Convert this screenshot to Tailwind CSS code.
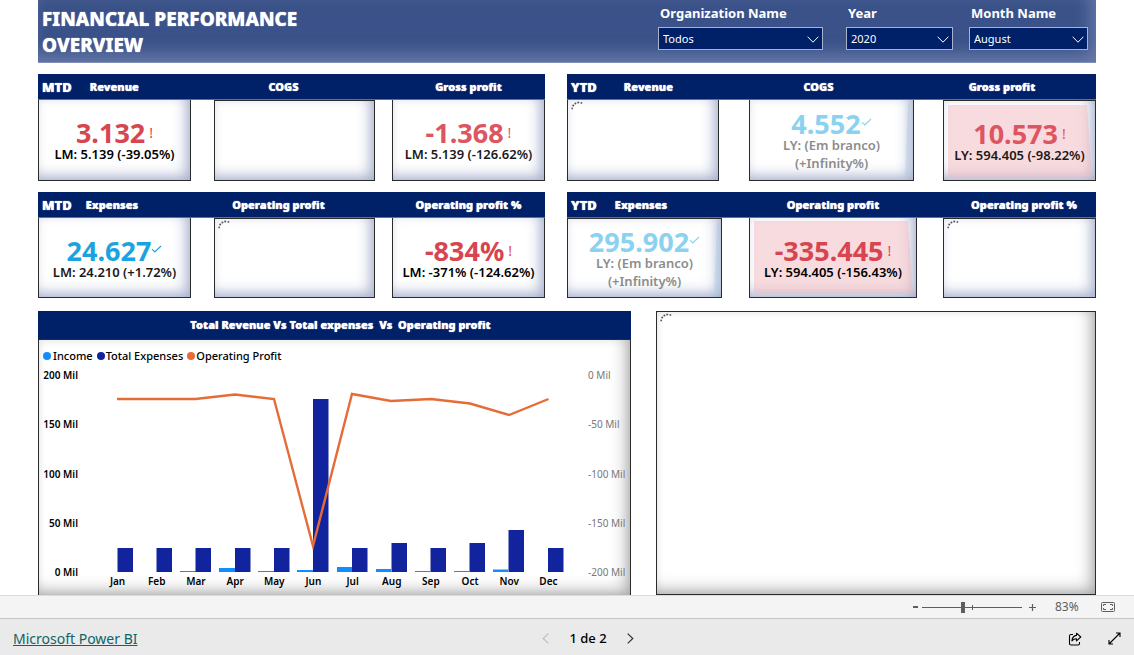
<!DOCTYPE html>
<html lang="pt">
<head>
<meta charset="utf-8">
<meta name="viewport" content="width=device-width, initial-scale=1">
<title>Financial Performance Overview</title>
<script src="https://cdn.jsdelivr.net/npm/@tailwindcss/browser@4"></script>
</head>
<body class="flex h-screen flex-col overflow-hidden bg-white font-['Noto_Sans','Open_Sans',sans-serif] text-black">
<svg class="hidden" aria-hidden="true">
  <symbol id="spinner" viewBox="0 0 12 9"><g fill="#555"><circle cx="1.2" cy="7.4" r=".9"/><circle cx="2.2" cy="4.6" r="1"/><circle cx="4.4" cy="2.4" r="1"/><circle cx="7.2" cy="1.4" r="1"/><circle cx="10.4" cy="1.9" r=".9"/></g></symbol>
  <symbol id="tick" viewBox="0 0 11 8"><path d="M1 4.2 3.8 7 10 1" fill="none" stroke="currentColor" stroke-width="1.1"/></symbol>
  <symbol id="caret" viewBox="0 0 12 7"><path d="M.6.7 6 6.2 11.4.7" fill="none" stroke="currentColor"/></symbol>
</svg>

<main class="flex min-h-0 flex-1 flex-col overflow-hidden px-[38px]">
  <header class="flex h-[63px] shrink-0 justify-between border-b border-[#8090b8] bg-[#3a5289] pr-2 pl-1 shadow-[inset_-6px_-8px_16px_rgba(150,160,200,0.5)]">
    <h1 class="w-[280px] pt-[6px] text-[19px] leading-[26px] font-extrabold text-white text-shadow-[0_0_1px_#fff]">FINANCIAL PERFORMANCE OVERVIEW</h1>
    <div class="flex text-white">
      <div class="mr-[23px] w-[165px]">
        <label for="org" class="block pt-1 pl-[2px] text-[13px] leading-[18px] font-bold">Organization Name</label>
        <div class="relative mt-[5px]">
          <select id="org" class="block h-[23px] w-full appearance-none border border-[#a9b3cd] bg-[#002068] pt-[2px] pl-1 text-[11px] text-white"><option>Todos</option></select>
          <svg class="pointer-events-none absolute top-[9px] right-1 h-[7px] w-3"><use href="#caret"/></svg>
        </div>
      </div>
      <div class="mr-4 w-[107px]">
        <label for="year" class="block pt-1 pl-[2px] text-[13px] leading-[18px] font-bold">Year</label>
        <div class="relative mt-[5px]">
          <select id="year" class="block h-[23px] w-full appearance-none border border-[#a9b3cd] bg-[#002068] pt-[2px] pl-1 text-[11px] text-white"><option>2020</option></select>
          <svg class="pointer-events-none absolute top-[9px] right-1 h-[7px] w-3"><use href="#caret"/></svg>
        </div>
      </div>
      <div class="w-[119px]">
        <label for="month" class="block pt-1 pl-[2px] text-[13px] leading-[18px] font-bold">Month Name</label>
        <div class="relative mt-[5px]">
          <select id="month" class="block h-[23px] w-full appearance-none border border-[#a9b3cd] bg-[#002068] pt-[2px] pl-1 text-[11px] text-white"><option>August</option></select>
          <svg class="pointer-events-none absolute top-[9px] right-1 h-[7px] w-3"><use href="#caret"/></svg>
        </div>
      </div>
    </div>
  </header>

  <!-- First KPI row -->
  <div class="mt-[11px] grid shrink-0 grid-cols-[507fr_529fr] gap-[22px]">
    <section>
      <div class="grid h-[26px] grid-cols-[153fr_161fr_153fr] items-center gap-x-5 border-b border-[#5a6fa3] bg-[#002068] pt-[2px] text-center text-[11px] font-black text-white text-shadow-[0_0_1px_#fff]">
        <h2 class="flex items-center gap-[18px] pl-1"><span class="text-[13px]">MTD</span><span>Revenue</span></h2>
        <h2 class="pr-4">COGS</h2>
        <h2>Gross profit</h2>
      </div>
      <div class="grid h-[81px] grid-cols-[153fr_23fr_161fr_17fr_153fr] text-center">
        <article class="col-start-1 flex flex-col items-center justify-center border border-t-0 border-[#2b2b2b] pt-1 shadow-[inset_-8px_-8px_14px_-4px_rgba(70,90,150,0.42),inset_0_0_8px_rgba(70,90,150,0.15)]">
          <p class="flex items-center text-[27px] leading-[24px] font-bold text-[#d64550]">3.132<span class="ml-1 text-[14px] font-normal">!</span></p>
          <p class="text-[13px] leading-[18px] font-semibold">LM: 5.139 (-39.05%)</p>
        </article>
        <article class="col-start-3 border border-[#2b2b2b] shadow-[inset_-8px_-8px_14px_-4px_rgba(70,90,150,0.42),inset_0_0_8px_rgba(70,90,150,0.15)]"></article>
        <article class="col-start-5 flex flex-col items-center justify-center border border-t-0 border-[#2b2b2b] pt-1 shadow-[inset_-8px_-8px_14px_-4px_rgba(70,90,150,0.42),inset_0_0_8px_rgba(70,90,150,0.15)]">
          <p class="flex items-center text-[27px] leading-[24px] font-bold text-[#dc5560]">-1.368<span class="ml-1 text-[14px] font-normal">!</span></p>
          <p class="text-[13px] leading-[18px] font-semibold text-[#1a1a1a]">LM: 5.139 (-126.62%)</p>
        </article>
      </div>
    </section>
    <section>
      <div class="grid h-[26px] grid-cols-[152fr_165fr_152fr] items-center gap-x-[30px] border-b border-[#5a6fa3] bg-[#002068] pt-[2px] text-center text-[11px] font-black text-white text-shadow-[0_0_1px_#fff]">
        <h2 class="flex items-center gap-[27px] pl-1"><span class="text-[13px]">YTD</span><span>Revenue</span></h2>
        <h2 class="pr-[26px]">COGS</h2>
        <h2 class="pr-9">Gross profit</h2>
      </div>
      <div class="grid h-[81px] grid-cols-[152fr_30fr_165fr_29fr_153fr] text-center">
        <article class="col-start-1 border border-t-0 border-[#2b2b2b] pt-px shadow-[inset_-8px_-8px_14px_-4px_rgba(70,90,150,0.42),inset_0_0_8px_rgba(70,90,150,0.15)]"><svg class="ml-[3px] h-[9px] w-3" role="img" aria-label="Loading"><use href="#spinner"/></svg></article>
        <article class="relative col-start-3 flex flex-col items-center justify-center border border-t-0 border-[#2b2b2b] pt-1 shadow-[inset_-8px_-8px_14px_-4px_rgba(70,90,150,0.42),inset_0_0_8px_rgba(70,90,150,0.15)]">
          <svg class="absolute inset-0 size-full" viewBox="0 0 163 79" preserveAspectRatio="none"><path d="M158 4h2v72h-5z" fill="#a9cde8" opacity=".4"/></svg>
          <p class="flex items-center text-[27px] leading-[24px] font-bold text-[#8bd1f0]">4.552<svg class="mb-1 h-2 w-[11px]"><use href="#tick"/></svg></p>
          <p class="w-[110px] text-[13px] leading-[18px] font-semibold text-[#8c8c8c]">LY: (Em branco) (+Infinity%)</p>
        </article>
        <article class="relative col-start-5 flex flex-col items-center justify-center border border-[#2b2b2b] pt-1 shadow-[inset_-8px_-8px_14px_-4px_rgba(70,90,150,0.42),inset_0_0_8px_rgba(70,90,150,0.15)]">
          <svg class="absolute inset-0 size-full" viewBox="0 0 151 79" preserveAspectRatio="none"><path d="M4 4h139l5 73H4z" fill="#f0b4bb" opacity=".48"/></svg>
          <p class="relative flex items-center text-[27px] leading-[24px] font-bold text-[#dc5560]">10.573<span class="ml-1 text-[14px] font-normal">!</span></p>
          <p class="relative text-[13px] leading-[18px] font-semibold text-[#1a1a1a]">LY: 594.405 (-98.22%)</p>
        </article>
      </div>
    </section>
  </div>

  <!-- Second KPI row -->
  <div class="mt-[11px] grid shrink-0 grid-cols-[507fr_529fr] gap-[22px]">
    <section>
      <div class="grid h-[26px] grid-cols-[153fr_161fr_153fr] items-center gap-x-5 border-b border-[#5a6fa3] bg-[#002068] pt-[2px] text-center text-[11px] font-black text-white text-shadow-[0_0_1px_#fff]">
        <h2 class="flex items-center gap-[14px] pl-1"><span class="text-[13px]">MTD</span><span>Expenses</span></h2>
        <h2 class="pr-[26px]">Operating profit</h2>
        <h2>Operating profit %</h2>
      </div>
      <div class="grid h-[80px] grid-cols-[153fr_23fr_161fr_17fr_153fr] text-center">
        <article class="col-start-1 flex flex-col items-center justify-center border border-t-0 border-[#2b2b2b] pt-1 shadow-[inset_-8px_-8px_14px_-4px_rgba(70,90,150,0.42),inset_0_0_8px_rgba(70,90,150,0.15)]">
          <p class="flex items-center text-[27px] leading-[24px] font-bold text-[#1aa3e0]">24.627<svg class="mb-1 h-2 w-[11px]"><use href="#tick"/></svg></p>
          <p class="text-[13px] leading-[18px] font-semibold text-[#1a1a1a]">LM: 24.210 (+1.72%)</p>
        </article>
        <article class="col-start-3 border border-[#2b2b2b] shadow-[inset_-8px_-8px_14px_-4px_rgba(70,90,150,0.42),inset_0_0_8px_rgba(70,90,150,0.15)]"><svg class="mt-px ml-[3px] h-[9px] w-3" role="img" aria-label="Loading"><use href="#spinner"/></svg></article>
        <article class="col-start-5 flex flex-col items-center justify-center border border-t-0 border-[#2b2b2b] pt-1 shadow-[inset_-8px_-8px_14px_-4px_rgba(70,90,150,0.42),inset_0_0_8px_rgba(70,90,150,0.15)]">
          <p class="flex items-center text-[27px] leading-[24px] font-bold text-[#d64550]">-834%<span class="ml-1 text-[14px] font-normal">!</span></p>
          <p class="text-[13px] leading-[18px] font-semibold">LM: -371% (-124.62%)</p>
        </article>
      </div>
    </section>
    <section>
      <div class="grid h-[26px] grid-cols-[155fr_168fr_152fr] items-center gap-x-[27px] border-b border-[#5a6fa3] bg-[#002068] pt-[2px] text-center text-[11px] font-black text-white text-shadow-[0_0_1px_#fff]">
        <h2 class="flex items-center gap-[18px] pl-1"><span class="text-[13px]">YTD</span><span>Expenses</span></h2>
        <h2>Operating profit</h2>
        <h2 class="pl-2">Operating profit %</h2>
      </div>
      <div class="grid h-[80px] grid-cols-[155fr_27fr_168fr_26fr_153fr] text-center">
        <article class="relative col-start-1 flex flex-col items-center justify-center border border-[#2b2b2b] pt-1 shadow-[inset_-8px_-8px_14px_-4px_rgba(70,90,150,0.42),inset_0_0_8px_rgba(70,90,150,0.15)]">
          <svg class="absolute inset-0 size-full" viewBox="0 0 153 78" preserveAspectRatio="none"><path d="M149 4h3l-1 72h-5z" fill="#a9cde8" opacity=".4"/></svg>
          <p class="flex items-center text-[27px] leading-[24px] font-bold text-[#8bd1f0]">295.902<svg class="mb-1 h-2 w-[11px]"><use href="#tick"/></svg></p>
          <p class="w-[110px] text-[13px] leading-[18px] font-semibold text-[#8c8c8c]">LY: (Em branco) (+Infinity%)</p>
        </article>
        <article class="relative col-start-3 flex flex-col items-center justify-center border border-t-0 border-[#2b2b2b] pt-1 shadow-[inset_-8px_-8px_14px_-4px_rgba(70,90,150,0.42),inset_0_0_8px_rgba(70,90,150,0.15)]">
          <svg class="absolute inset-0 size-full" viewBox="0 0 166 78" preserveAspectRatio="none"><path d="M4 3h154l5 72H4z" fill="#f0b4bb" opacity=".48"/></svg>
          <p class="relative flex items-center text-[27px] leading-[24px] font-bold text-[#d64550]">-335.445<span class="ml-1 text-[14px] font-normal">!</span></p>
          <p class="relative text-[13px] leading-[18px] font-semibold">LY: 594.405 (-156.43%)</p>
        </article>
        <article class="col-start-5 border border-[#2b2b2b] shadow-[inset_-8px_-8px_14px_-4px_rgba(70,90,150,0.42),inset_0_0_8px_rgba(70,90,150,0.15)]"><svg class="mt-px ml-[3px] h-[9px] w-3" role="img" aria-label="Loading"><use href="#spinner"/></svg></article>
      </div>
    </section>
  </div>

  <div class="mt-[13px] grid min-h-0 flex-1 grid-cols-[593fr_440fr] gap-[25px]">
    <section class="flex flex-col">
      <h2 class="h-[28px] bg-[#002068] pl-3 text-center text-[11px] leading-[28px] font-black whitespace-pre text-white text-shadow-[0_0_1px_#fff]">Total Revenue Vs Total expenses  Vs  Operating profit</h2>
      <div class="flex-1 border border-b-0 border-[#2b2b2b] px-1 pt-2 shadow-[inset_-8px_-8px_16px_-4px_rgba(0,0,0,0.3),inset_0_0_8px_rgba(0,0,0,0.1)]">
        <ul class="flex gap-1 text-[11px] leading-4 font-medium">
          <li class="flex items-center gap-[2px]"><span class="size-2 rounded-full bg-[#118dff]"></span>Income</li>
          <li class="flex items-center gap-px"><span class="size-2 rounded-full bg-[#12239e]"></span>Total Expenses</li>
          <li class="flex items-center gap-px"><span class="size-2 rounded-full bg-[#e66c37]"></span>Operating Profit</li>
        </ul>
        <div class="mt-[11px] flex">
          <div class="-my-[7px] flex w-[35px] flex-col justify-between text-right text-[10px] leading-[14px] font-semibold whitespace-nowrap">
            <span>200 Mil</span><span>150 Mil</span><span>100 Mil</span><span>50 Mil</span><span>0 Mil</span>
          </div>
          <svg class="mr-5 ml-5 h-[197px] min-w-0 flex-1" viewBox="0 0 470 197" preserveAspectRatio="none" role="img" aria-label="Income, expenses and operating profit by month">
            <g fill="#118dff"><path d="M82 196h16v1H82zM121 193h16v4h-16zM160 196h16v1h-16zM199 195h16v2h-16zM239 192h15v5h-15zM278 194h15v3h-15zM317 196h15v1h-15zM356 196h15v1h-15zM395 194.500h15v2.500h-15z"/></g>
            <g fill="#12239e"><path d="M19.500 173H35v24H19.500zM58.500 173H74v24H58.500zM97.500 173H113v24H97.500zM137 173h15.500v24H137zM176 173h15.500v24H176zM215 24h15.500v173H215zM254 173h15.500v24H254zM293.500 168H309v29h-15.500zM332.500 173H348v24h-15.500zM371.500 168H387v29h-15.500zM410.500 155H426v42h-15.500zM450 173h15.500v24H450z"/></g>
            <polyline fill="none" stroke="#e66c37" stroke-width="2.400" points="19,24 58,24 97.500,24 137,19.500 176,24 215,171 254,19 293,26 333,24 372,28.500 411,40 450.500,24"/>
          </svg>
          <div class="-my-[7px] flex w-[38px] flex-col justify-between text-[10px] leading-[14px] whitespace-nowrap text-[#777]">
            <span>0 Mil</span><span>-50 Mil</span><span>-100 Mil</span><span>-150 Mil</span><span>-200 Mil</span>
          </div>
        </div>
        <div class="mt-[2px] mr-[58px] ml-[55px] grid grid-cols-12 text-center text-[10px] leading-[14px] font-semibold">
          <span>Jan</span><span>Feb</span><span>Mar</span><span>Apr</span><span>May</span><span>Jun</span><span>Jul</span><span>Aug</span><span>Sep</span><span>Oct</span><span>Nov</span><span>Dec</span>
        </div>
      </div>
    </section>
    <section class="border border-[#2b2b2b] shadow-[inset_-8px_-8px_16px_-4px_rgba(0,0,0,0.3),inset_0_0_8px_rgba(0,0,0,0.1)]"><svg class="mt-px ml-[3px] h-[9px] w-3" role="img" aria-label="Loading"><use href="#spinner"/></svg></section>
  </div>
</main>

<div class="flex h-6 shrink-0 items-center justify-end border-y border-t-[#dcdcdc] border-b-[#c4c4c4] bg-[#f4f4f4] pr-[19px] text-[#605e5c]">
  <button aria-label="Zoom out" class="flex h-4 w-[14px] items-center justify-center"><svg class="h-2 w-[5px]" viewBox="0 0 5 8"><path d="M0 4h5" stroke="currentColor" stroke-width="2"/></svg></button>
  <div class="relative flex h-4 w-[100px] items-center">
    <input type="range" aria-label="Zoom" min="0" max="100" value="41" class="h-4 w-full appearance-none bg-transparent [&::-webkit-slider-runnable-track]:h-px [&::-webkit-slider-runnable-track]:bg-[#605e5c] [&::-webkit-slider-thumb]:-mt-[5px] [&::-webkit-slider-thumb]:h-[11px] [&::-webkit-slider-thumb]:w-1 [&::-webkit-slider-thumb]:appearance-none [&::-webkit-slider-thumb]:bg-[#605e5c]">
    <span class="pointer-events-none absolute top-[6px] left-1/2 h-[5px] w-px bg-[#605e5c]"></span>
  </div>
  <button aria-label="Zoom in" class="ml-1 flex h-4 w-3 items-center justify-center"><svg class="size-[9px]" viewBox="0 0 9 9"><path d="M4.500 1v7M1 4.500h7" stroke="currentColor" stroke-width="1.200"/></svg></button>
  <span class="ml-[17px] w-[46px] text-[12px] leading-4">83%</span>
  <button aria-label="Fit to page"><svg class="h-[10px] w-[14px]" viewBox="0 0 14 10" fill="none" stroke="currentColor"><rect x=".5" y=".5" width="13" height="9" rx="1"/><path d="M2.500 4V2.500H5M9 2.500h2.500V4M11.500 6v1.500H9M5 7.500H2.500V6"/></svg></button>
</div>

<footer class="grid h-9 shrink-0 grid-cols-[1fr_auto_1fr] items-center bg-[#eaeaea] px-[13px] pt-[3px]">
  <a href="#" class="justify-self-start text-[14px] leading-5 text-[#0f6466] underline">Microsoft Power BI</a>
  <nav class="mr-[-42px] flex items-center" aria-label="Pages">
    <button aria-label="Previous page" class="text-[#bdbdbd]"><svg class="h-[11px] w-[7px]" viewBox="0 0 7 11"><path d="M6.300.6 1.200 5.500l5.100 4.900" fill="none" stroke="currentColor" stroke-width="1.100"/></svg></button>
    <span class="w-[78px] text-center text-[13px] font-medium">1 de 2</span>
    <button aria-label="Next page" class="text-[#333]"><svg class="h-[11px] w-[7px]" viewBox="0 0 7 11"><path d="M.7.600 5.800 5.500.7 10.400" fill="none" stroke="currentColor" stroke-width="1.200"/></svg></button>
  </nav>
  <div class="flex items-center gap-[26px] justify-self-end text-black">
    <button aria-label="Share"><svg class="size-[14px]" viewBox="0 0 14 14" fill="none" stroke="currentColor" stroke-width="1.100" stroke-linejoin="round"><path d="M5 2.500H3a1.500 1.500 0 0 0-1.500 1.500v7.500A1.500 1.500 0 0 0 3 13h7a1.500 1.500 0 0 0 1.500-1.500V10"/><path d="M8.500 1.200 12.800 5 8.500 8.800V6.700C6.500 6.700 5 7.300 3.900 8.800 4.200 5.800 5.700 3.700 8.500 3.400z"/></svg></button>
    <button aria-label="Full screen"><svg class="size-[13px]" viewBox="0 0 13 13" fill="none" stroke="currentColor" stroke-width="1.100"><path d="M1 12 12 1M8 1h4v4M1 8v4h4"/></svg></button>
  </div>
</footer>
</body>
</html>
